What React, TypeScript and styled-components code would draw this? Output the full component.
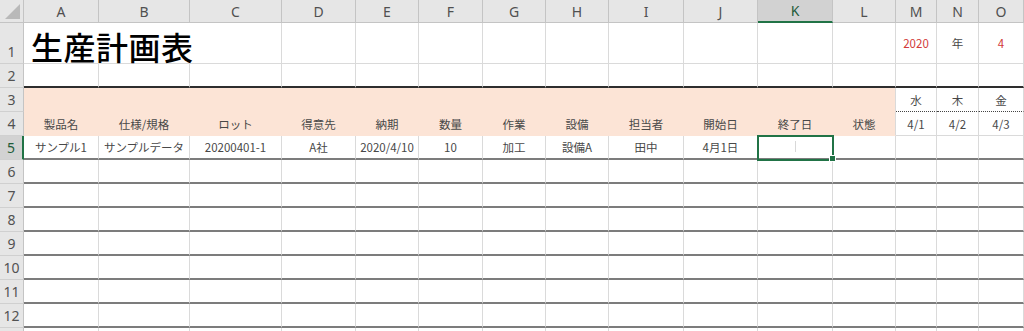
import React from 'react';
import styled, { createGlobalStyle, css } from 'styled-components';

const GRID = '#dadada';
const HEAD_BG = '#e6e6e6';
const HEAD_LINE = '#c4c4c4';
const PEACH = '#fce4d6';
const GREEN = '#217346';

const COLS = ['A', 'B', 'C', 'D', 'E', 'F', 'G', 'H', 'I', 'J', 'K', 'L', 'M', 'N', 'O'];
const WIDTHS = [75, 91, 92, 74, 63, 64, 63, 63, 75, 74, 75, 63, 41, 42, 45];
const ACTIVE_COL = 'K';
const ACTIVE_ROW = 5;
const LAST_LABELED_ROW = 12;

type Edge = 'grid' | 'heavy' | 'rule' | 'dots' | 'fill';
type Tone = 'plain' | 'red';

const GlobalStyle = createGlobalStyle`
  html, body {
    margin: 0;
    padding: 0;
    background: #ffffff;
    overflow: hidden;
  }
  body {
    font-family: "Noto Sans CJK JP", "Noto Sans", sans-serif;
  }
`;

const Sheet = styled.div`
  display: grid;
  grid-template-columns: 24px ${WIDTHS.map(w => `${w}px`).join(' ')};
  grid-template-rows: 23px 41px repeat(12, 24px);
  width: 1024px;
  height: 331px;
  overflow: hidden;
  background: #ffffff;
`;

const Corner = styled.div`
  position: relative;
  box-sizing: border-box;
  background: ${HEAD_BG};
  border-right: 1px solid ${HEAD_LINE};
  border-bottom: 1px solid ${HEAD_LINE};

  &::after {
    content: '';
    position: absolute;
    right: 3px;
    bottom: 3px;
    width: 15px;
    height: 15px;
    background: #b9b9b9;
    clip-path: polygon(100% 0, 100% 100%, 0 100%);
  }
`;

const ColHead = styled.div<{ $active?: boolean }>`
  box-sizing: border-box;
  display: flex;
  align-items: center;
  justify-content: center;
  background: ${p => (p.$active ? '#d2d2d2' : HEAD_BG)};
  border-right: 1px solid ${HEAD_LINE};
  border-bottom: ${p => (p.$active ? `2px solid ${GREEN}` : `1px solid ${HEAD_LINE}`)};
  font-family: "Noto Sans", "Open Sans", sans-serif;
  font-size: 14px;
  color: ${p => (p.$active ? '#1f5c3a' : '#505050')};
`;

const RowHead = styled.div<{ $active?: boolean }>`
  box-sizing: border-box;
  display: flex;
  align-items: flex-end;
  justify-content: center;
  padding-bottom: 1px;
  background: ${p => (p.$active ? '#d2d2d2' : HEAD_BG)};
  border-right: ${p => (p.$active ? `2px solid ${GREEN}` : `1px solid ${HEAD_LINE}`)};
  border-bottom: 1px solid #d0d0d0;
  font-family: "Noto Sans", "Open Sans", sans-serif;
  font-size: 14px;
  line-height: 20px;
  color: ${p => (p.$active ? '#1f5c3a' : '#525252')};
`;

const edgeStyle = (edge: Edge, fill: string) => {
  switch (edge) {
    case 'heavy':
      return css`border-bottom: 2px solid #2e2e2e;`;
    case 'rule':
      return css`border-bottom: 2px solid #7c7c7c;`;
    case 'dots':
      return css`border-bottom: 1px dotted #444;`;
    case 'fill':
      return css`border-bottom: 1px solid ${fill};`;
    default:
      return css`border-bottom: 1px solid ${GRID};`;
  }
};

const Cell = styled.div<{ $fill?: string; $edge: Edge; $seam?: boolean; $tone?: Tone; $selected?: boolean }>`
  position: relative;
  box-sizing: border-box;
  display: flex;
  align-items: center;
  justify-content: center;
  background: ${p => p.$fill ?? '#ffffff'};
  border-right: 1px solid ${p => (p.$seam ? p.$fill : GRID)};
  ${p => edgeStyle(p.$edge, p.$fill ?? '#ffffff')}
  font-family: "Noto Sans CJK JP", "Noto Sans", sans-serif;
  font-size: 11.5px;
  color: ${p => (p.$tone === 'red' ? '#d23a3a' : '#484848')};
  white-space: nowrap;
  overflow: visible;

  ${p =>
    p.$selected &&
    css`
      z-index: 2;
      outline: 2px solid ${GREEN};
      outline-offset: -1px;

      &::before {
        content: '';
        position: absolute;
        left: 50%;
        top: 5px;
        bottom: 6px;
        width: 1px;
        background: #d8d8d8;
      }

      &::after {
        content: '';
        position: absolute;
        right: -4px;
        bottom: -4px;
        width: 5px;
        height: 5px;
        background: ${GREEN};
        border: 1px solid #ffffff;
      }
    `}
`;

const TitleCell = styled.div`
  grid-column: span 3;
  box-sizing: border-box;
  display: flex;
  align-items: flex-end;
  padding: 0 0 1px 7px;
  border-right: 1px solid ${GRID};
  border-bottom: 1px solid ${GRID};
  font-family: "Noto Sans CJK JP", sans-serif;
  font-size: 32px;
  font-weight: 500;
  line-height: 32px;
  letter-spacing: 0.5px;
  color: #000000;
`;

interface Spec {
  text?: string;
  tone?: Tone;
}

const headings = ['製品名', '仕様/規格', 'ロット', '得意先', '納期', '数量', '作業', '設備', '担当者', '開始日', '終了日', '状態'];
const sample = ['サンプル1', 'サンプルデータ', '20200401-1', 'A社', '2020/4/10', '10', '加工', '設備A', '田中', '4月1日', '', ''];

// cells for columns M..O of each row
const calendar: Record<number, Spec[]> = {
  1: [{ text: '2020', tone: 'red' }, { text: '年' }, { text: '4', tone: 'red' }],
  3: [{ text: '水' }, { text: '木' }, { text: '金' }],
  4: [{ text: '4/1' }, { text: '4/2' }, { text: '4/3' }],
};

const rowEdge = (row: number): Edge => {
  if (row === 2) return 'heavy';
  if (row >= 5 && row <= 12) return 'rule';
  return 'grid';
};

const renderRow = (row: number) => {
  const cells: React.ReactNode[] = [];
  const edge = rowEdge(row);
  const band = row === 3 || row === 4;

  COLS.forEach((col, i) => {
    const key = `${col}${row}`;
    if (row === 1 && i === 0) {
      cells.push(<TitleCell key={key}>生産計画表</TitleCell>);
      return;
    }
    if (row === 1 && (i === 1 || i === 2)) return;

    if (i >= 12) {
      const spec = calendar[row]?.[i - 12] ?? {};
      cells.push(
        <Cell key={key} $edge={row === 3 ? 'dots' : edge} $tone={spec.tone}>
          {spec.text}
        </Cell>
      );
      return;
    }

    if (band) {
      cells.push(
        <Cell key={key} $fill={PEACH} $seam={i < 11} $edge="fill">
          {row === 4 ? headings[i] : ''}
        </Cell>
      );
      return;
    }

    cells.push(
      <Cell key={key} $edge={edge} $selected={row === ACTIVE_ROW && col === ACTIVE_COL}>
        {row === 5 ? sample[i] : ''}
      </Cell>
    );
  });

  return (
    <React.Fragment key={row}>
      <RowHead $active={row === ACTIVE_ROW}>{row <= LAST_LABELED_ROW ? row : ''}</RowHead>
      {cells}
    </React.Fragment>
  );
};

export default function App() {
  const rows = Array.from({ length: 13 }, (_, i) => i + 1);
  return (
    <>
      <GlobalStyle />
      <Sheet>
        <Corner />
        {COLS.map(col => (
          <ColHead key={col} $active={col === ACTIVE_COL}>
            {col}
          </ColHead>
        ))}
        {rows.map(renderRow)}
      </Sheet>
    </>
  );
}
